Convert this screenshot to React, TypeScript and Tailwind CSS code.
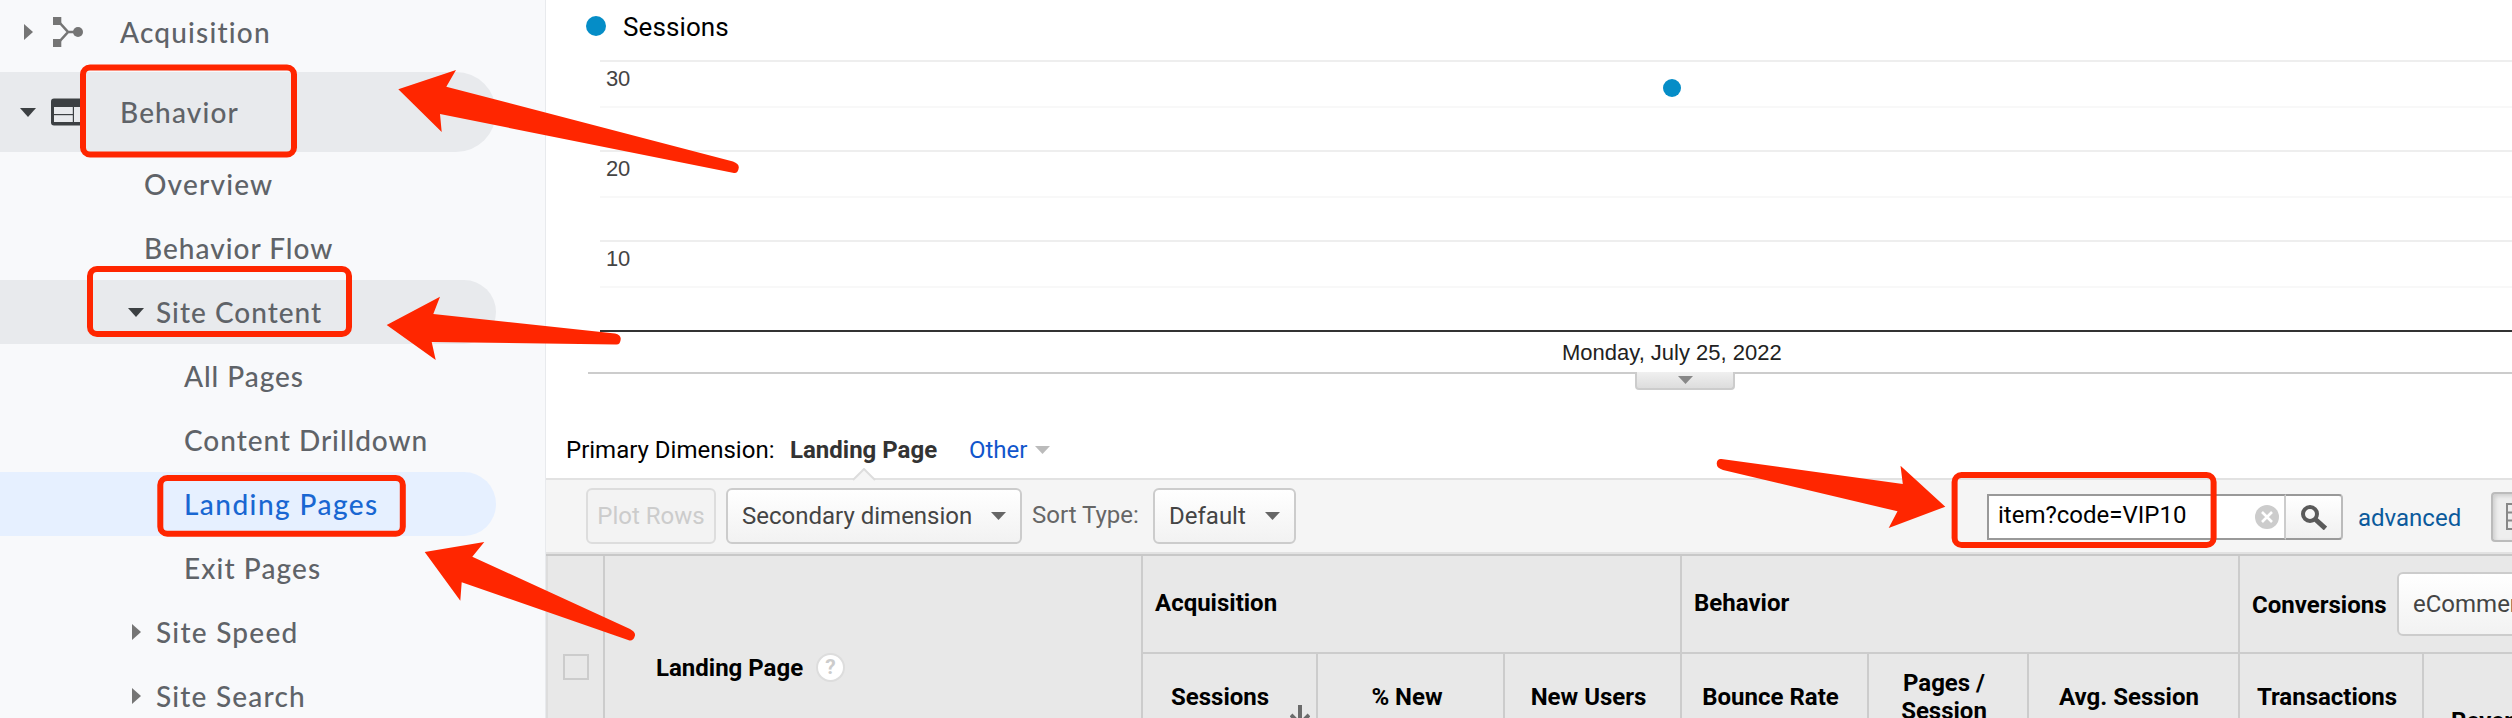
import clsx from "clsx";

interface NavItem {
  label: string;
  // left padding, row height and letter spacing of the row
  className: string;
  arrow?: "right" | "down";
  icon?: React.ReactNode;
}

function AcquisitionIcon() {
  return (
    <svg width="30" height="30" viewBox="0 0 30 30" className="ml-5 mr-[37px] shrink-0">
      <g fill="#757575">
        <rect x="0" y="0" width="8.3" height="8" />
        <rect x="0" y="22" width="8.3" height="8" />
        <circle cx="25" cy="15" r="5" />
      </g>
      <path d="M6 5 L15 15 L6 25 M15 15 H25" fill="none" stroke="#757575" strokeWidth="2.6" />
    </svg>
  );
}

function BehaviorIcon() {
  return (
    <svg width="33" height="28" viewBox="0 0 33 28" className="ml-[15px] mr-[36px] shrink-0">
      <rect x="0" y="0.5" width="33" height="27" rx="3" fill="#3c4043" />
      <g fill="#e8eaed">
        <rect x="3" y="9" width="18.8" height="7" />
        <rect x="3" y="17.2" width="18.8" height="6.8" />
        <rect x="23" y="9" width="7" height="15" />
      </g>
    </svg>
  );
}

const navItems: NavItem[] = [
  {
    label: "Acquisition",
    className: "h-[80px] -mt-2 pl-6 tracking-[1.2px]",
    arrow: "right",
    icon: <AcquisitionIcon />,
  },
  {
    label: "Behavior",
    className: "h-[80px] pl-5 bg-[#e8eaed] tracking-[1.15px]",
    arrow: "down",
    icon: <BehaviorIcon />,
  },
  { label: "Overview", className: "h-16 pl-[144px] tracking-[1.2px]" },
  { label: "Behavior Flow", className: "h-16 pl-[144px] tracking-[1px]" },
  {
    label: "Site Content",
    className: "h-16 pl-[128px] gap-3 bg-[#e8eaed] tracking-[1px]",
    arrow: "down",
  },
  { label: "All Pages", className: "h-16 pl-[184px] tracking-[0.95px]" },
  { label: "Content Drilldown", className: "h-16 pl-[184px] tracking-[0.95px]" },
  {
    label: "Landing Pages",
    className: "h-16 pl-[184px] bg-[#e6f0ff] text-[#1967d2] tracking-[1.45px]",
  },
  { label: "Exit Pages", className: "h-16 pl-[184px] tracking-[1.1px]" },
  { label: "Site Speed", className: "h-16 pl-[132px] gap-[15px] tracking-[1.25px]", arrow: "right" },
  { label: "Site Search", className: "h-16 pl-[132px] gap-[15px] tracking-[1.2px]", arrow: "right" },
];

function NavArrow({ dir }: { dir: "right" | "down" }) {
  return dir === "right" ? (
    <svg width="9" height="16" className="shrink-0">
      <path d="M0 0 L9 8 L0 16 Z" fill="#757575" />
    </svg>
  ) : (
    <svg width="16" height="9" className="shrink-0">
      <path d="M0 0 H16 L8 9 Z" fill="#3c4043" />
    </svg>
  );
}

function Sidebar() {
  return (
    <nav className="w-[546px] h-full shrink-0 border-r border-[#e8eaed] bg-[#f8f9fb] overflow-hidden font-['Lato',sans-serif] font-medium text-[28px] leading-8 text-[#5f6368]">
      {navItems.map((item) => (
        <div
          key={item.label}
          className={clsx("w-[496px] flex items-center rounded-r-full", item.className)}
        >
          {item.arrow && <NavArrow dir={item.arrow} />}
          {item.icon}
          <span className="whitespace-nowrap">{item.label}</span>
        </div>
      ))}
    </nav>
  );
}

function Caret({ className }: { className: string }) {
  return (
    <svg width="15" height="8" viewBox="0 0 15 8" className={clsx("shrink-0", className)}>
      <path d="M0 0 H15 L7.5 8 Z" fill="currentColor" />
    </svg>
  );
}

function Chart() {
  return (
    <section className="h-[390px]">
      <div className="h-[60px] pl-10 pt-[7px] flex items-start">
        <span className="size-5 mt-[9px] rounded-full bg-[#058dc7]" />
        <span className="ml-[17px] text-[26px] leading-10 tracking-[0.1px] text-black">Sessions</span>
      </div>
      <div className="relative ml-[54px] font-['Liberation_Sans',sans-serif] text-[22px] text-[#444]">
        {["30", "20", "10"].map((tick) => (
          <div key={tick} className="h-[90px] border-t-2 border-[#eee]">
            <div className="h-[46px] pl-1.5 pt-[5px] leading-6 tracking-[-0.3px] border-b-2 border-[#f8f8f8]">
              {tick}
            </div>
          </div>
        ))}
        <span className="absolute left-[1063px] top-[19px] size-[18px] rounded-full bg-[#058dc7]" />
      </div>
      <div className="ml-[54px] h-[42px] border-t-2 border-[#333] pl-[962px] pt-[9px] font-['Liberation_Sans',sans-serif] text-[22px] leading-6 text-[#222]">
        Monday, July 25, 2022
      </div>
      <div className="ml-[42px] h-[18px] border-t-2 border-[#ccc]">
        <div className="ml-[1047px] -mt-0.5 w-[100px] h-[18px] rounded-b-[4px] border-2 border-t-0 border-[#ccc] bg-linear-to-b from-[#f0f0f0] to-[#ddd] flex justify-center pt-1">
          <Caret className="text-[#888]" />
        </div>
      </div>
    </section>
  );
}

function DimensionTabs() {
  return (
    <div className="h-[88px] pt-[46px] pl-5 flex items-start text-[24px] leading-7 whitespace-nowrap">
      <span className="w-[224px] text-black">Primary Dimension:</span>
      <span className="w-[179px] font-bold text-[#333]">Landing Page</span>
      <span className="text-[#15c]">Other</span>
      <Caret className="mt-[10px] ml-[8px] text-[#bbb]" />
    </div>
  );
}

function Select({ label, className }: { label: string; className: string }) {
  return (
    <div
      className={clsx(
        "h-14 shrink-0 rounded-md border-2 border-[#ccc] bg-linear-to-b from-white to-[#f2f2f2] flex items-center justify-between pl-[14px] pr-3.5 text-[#444]",
        className
      )}
    >
      {label}
      <Caret className="text-[#666]" />
    </div>
  );
}

function SearchBox() {
  return (
    <div className="ml-[691px] mt-1.5 h-[46px] w-[356px] shrink-0 flex">
      <div className="w-[299px] border-2 border-[#999] border-r-[#ccc] bg-white flex items-center justify-between pl-[9px] pr-[5px] text-black">
        <span className="-mt-1">item?code=VIP10</span>
        <svg width="24" height="24" viewBox="0 0 24 24">
          <circle cx="12" cy="12" r="12" fill="#ccc" />
          <path d="M7 7 L17 17 M17 7 L7 17" stroke="#fff" strokeWidth="2.6" />
        </svg>
      </div>
      <div className="w-[57px] rounded-r border-y-2 border-r-2 border-y-[#999] border-r-[#bbb] bg-linear-to-b from-white to-[#f0f0f0] flex items-center justify-center">
        <svg width="26" height="25" viewBox="0 0 26 25" fill="none" stroke="#5a5a5a">
          <circle cx="9" cy="9" r="7" strokeWidth="4" />
          <path d="M14 14 L24.5 23.5" strokeWidth="5" />
        </svg>
      </div>
    </div>
  );
}

function Toolbar() {
  return (
    <div className="relative h-[78px] w-[1966px] border-t-2 border-[#e2e2e2] bg-[#f5f5f5] pt-2 pl-10 flex items-start text-[24px] leading-7 whitespace-nowrap shadow-[inset_0_-2px_0_#c8c8c8,inset_0_-4px_0_#e2e2e2]">
      <svg width="24" height="13" viewBox="0 0 24 13" className="absolute left-[306px] -top-[12px]">
        <path d="M1 12 L12 1 L23 12 V13 H1 Z" fill="#f5f5f5" />
        <path d="M1 12 L12 1 L23 12" fill="none" stroke="#ddd" strokeWidth="2" />
      </svg>
      <div className="w-[130px] h-14 shrink-0 rounded-md border-2 border-[#ddd] bg-[#f3f3f3] flex items-center justify-center text-[#ccc]">
        Plot Rows
      </div>
      <Select label="Secondary dimension" className="ml-2.5 w-[296px]" />
      <span className="ml-2.5 mt-[13px] w-[121px] shrink-0 text-[#666]">Sort Type:</span>
      <Select label="Default" className="w-[143px]" />
      <SearchBox />
      <a className="ml-[15px] mt-4 w-[133px] shrink-0 text-[#0b5a9c]">advanced</a>
      <div className="mt-1 h-[50px] w-[22px] shrink-0 rounded-l border-2 border-r-0 border-[#bbb] bg-[#eee] shadow-[inset_2px_2px_4px_#ccc] pl-[13px] pt-[9px] overflow-hidden">
        <svg width="26" height="27" viewBox="0 0 26 27" fill="none" stroke="#888" strokeWidth="2">
          <path d="M1 1 H25 V26 H1 Z M1 9.5 H25 M1 17.5 H25" />
        </svg>
      </div>
    </div>
  );
}

function HeadCell({ className, children }: { className: string; children: React.ReactNode }) {
  return (
    <div className={clsx("h-full shrink-0 border-[#ccc] text-center", className)}>{children}</div>
  );
}

function TableHead() {
  return (
    <div className="h-[162px] flex bg-[#e8e8e8] font-bold text-[24px] leading-7 text-black whitespace-nowrap">
      <div className="w-[57px] shrink-0 border-l-2 border-[#ddd] pl-[15px] pt-[98px]">
        <div className="size-[26px] border-2 border-[#ccc]" />
      </div>
      <div className="w-[538px] shrink-0 border-l-2 border-[#ccc] pl-[51px] pt-[97px] flex items-start">
        <span className="w-[160px] mt-[1px]">Landing Page</span>
        <span className="size-[29px] rounded-full border-2 border-[#ddd] bg-white text-center text-[21px] leading-[25px] text-[#ccc]">
          ?
        </span>
      </div>
      <div className="w-[539px] shrink-0 border-l-2 border-[#ccc]">
        <div className="h-[98px] border-b-2 border-[#ccc] pl-3 pt-[33px]">Acquisition</div>
        <div className="flex h-16">
          <HeadCell className="w-[173px] pt-[29px] pl-[28px] flex">
            Sessions
            <svg width="20" height="24" viewBox="0 0 20 24" className="ml-[21px] mt-[22px] shrink-0">
              <path d="M10 0 V20 M1 10 L10 19 L19 10" fill="none" stroke="#6b6b6b" strokeWidth="4" />
            </svg>
          </HeadCell>
          <HeadCell className="w-[187px] pt-[29px] border-l-2 pr-[7px]">% New</HeadCell>
          <HeadCell className="w-[177px] pt-[29px] border-l-2 pr-2">New Users</HeadCell>
        </div>
      </div>
      <div className="w-[558px] shrink-0 border-l-2 border-[#ccc]">
        <div className="h-[98px] border-b-2 border-[#ccc] pl-3 pt-[33px]">Behavior</div>
        <div className="flex h-16">
          <HeadCell className="w-[185px] pt-[29px] pr-2">Bounce Rate</HeadCell>
          <HeadCell className="w-[160px] pt-[15px] border-l-2 pr-2">
            Pages /<br />
            Session
          </HeadCell>
          <HeadCell className="w-[211px] pt-[29px] border-l-2 pr-[9px]">Avg. Session</HeadCell>
        </div>
      </div>
      <div className="w-[274px] shrink-0 border-l-2 border-[#ccc] overflow-hidden">
        <div className="h-[98px] border-b-2 border-[#ccc] pl-3 pt-4 flex items-start">
          <span className="mt-[19px] w-[145px] shrink-0">Conversions</span>
          <div className="h-16 w-[220px] shrink-0 rounded-md border-2 border-[#ccc] bg-linear-to-b from-white to-[#f2f2f2] pl-3.5 pt-4 font-normal text-[#444]">
            eCommerce
          </div>
        </div>
        <div className="flex h-16">
          <HeadCell className="w-[182px] pt-[29px] pr-2">Transactions</HeadCell>
          <HeadCell className="w-[170px] pt-[53px] border-l-2 pl-[27px] flex">Revenue</HeadCell>
        </div>
      </div>
    </div>
  );
}

// Red frames and arrows drawn over the page
function Annotations() {
  return (
    <svg
      width="2512"
      height="718"
      viewBox="0 0 2512 718"
      className="absolute inset-0 pointer-events-none"
    >
      <g fill="none" stroke="#ff2600" strokeWidth="6">
        <rect x="83" y="67.5" width="211" height="87" rx="7" />
        <rect x="90" y="269" width="259" height="65" rx="7" />
        <rect x="160.3" y="478" width="242.5" height="55.7" rx="7" />
        <rect x="1954.6" y="475" width="259" height="70" rx="7" />
      </g>
      <g fill="#ff2600">
        <path d="M398.3 89.3 L456 70 L446.3 86.7 L733 161.5 Q739.5 164 738.7 168 Q738 173.5 734 173 L440 114 L441.7 132 Z" />
        <path d="M386.7 325 L440 296.7 L433.3 314 L615 333.5 Q621 335 620.7 339 Q620.5 344.8 616 344.5 L431.7 342 L435.7 360 Z" />
        <path d="M424.7 552 L484.3 542 L472.3 556.7 L630 629 Q635.5 632 635 635.5 Q633.5 641 629.5 640.5 L461.7 582.3 L460.3 600.7 Z" />
        <path d="M1945.3 506.7 L1900.5 465.7 L1902.8 484 L1721.5 459 Q1717 458.5 1716.7 463.5 Q1716.7 468 1723 470 L1897.5 511.3 L1888.7 528 Z" />
      </g>
    </svg>
  );
}

export default function App() {
  return (
    <div className="relative w-[2512px] h-[718px] overflow-hidden flex bg-white font-['Roboto',sans-serif]">
      <Sidebar />
      <main className="w-[1966px] shrink-0">
        <Chart />
        <DimensionTabs />
        <Toolbar />
        <TableHead />
      </main>
      <Annotations />
    </div>
  );
}
